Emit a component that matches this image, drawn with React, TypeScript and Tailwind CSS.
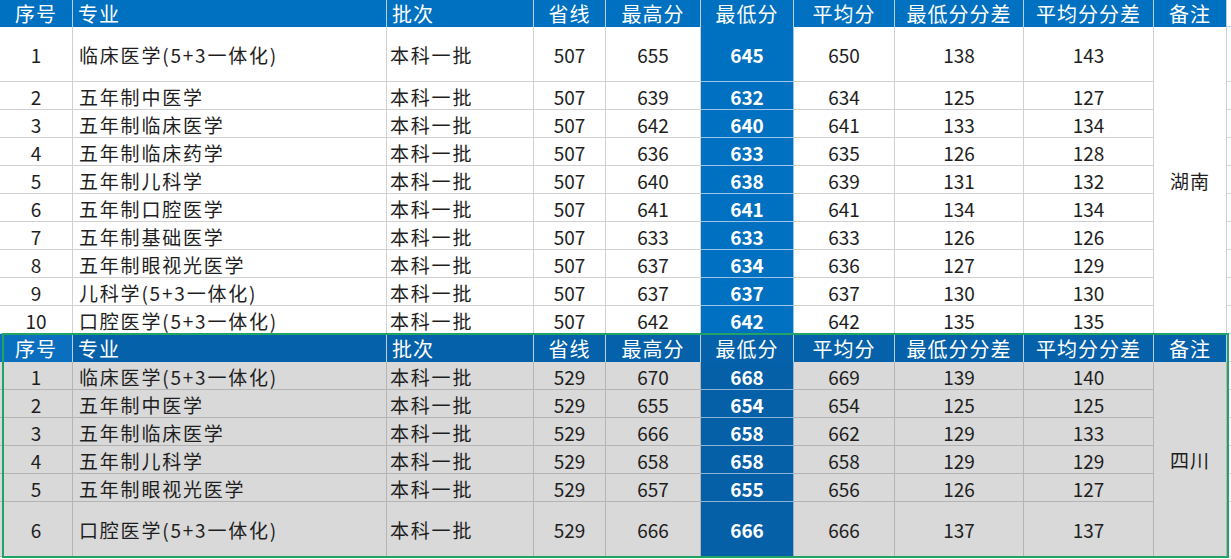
import React from "react";

type Row = [string, string, string, string, string, string, string, string, string];

const s1: Row[] = [
  ["1", "临床医学(5+3一体化)", "本科一批", "507", "655", "645", "650", "138", "143"],
  ["2", "五年制中医学", "本科一批", "507", "639", "632", "634", "125", "127"],
  ["3", "五年制临床医学", "本科一批", "507", "642", "640", "641", "133", "134"],
  ["4", "五年制临床药学", "本科一批", "507", "636", "633", "635", "126", "128"],
  ["5", "五年制儿科学", "本科一批", "507", "640", "638", "639", "131", "132"],
  ["6", "五年制口腔医学", "本科一批", "507", "641", "641", "641", "134", "134"],
  ["7", "五年制基础医学", "本科一批", "507", "633", "633", "633", "126", "126"],
  ["8", "五年制眼视光医学", "本科一批", "507", "637", "634", "636", "127", "129"],
  ["9", "儿科学(5+3一体化)", "本科一批", "507", "637", "637", "637", "130", "130"],
  ["10", "口腔医学(5+3一体化)", "本科一批", "507", "642", "642", "642", "135", "135"],
];

const s2: Row[] = [
  ["1", "临床医学(5+3一体化)", "本科一批", "529", "670", "668", "669", "139", "140"],
  ["2", "五年制中医学", "本科一批", "529", "655", "654", "654", "125", "125"],
  ["3", "五年制临床医学", "本科一批", "529", "666", "658", "662", "129", "133"],
  ["4", "五年制儿科学", "本科一批", "529", "658", "658", "658", "129", "129"],
  ["5", "五年制眼视光医学", "本科一批", "529", "657", "655", "656", "126", "127"],
  ["6", "口腔医学(5+3一体化)", "本科一批", "529", "666", "666", "666", "137", "137"],
];

const headers = ["序号", "专业", "批次", "省线", "最高分", "最低分", "平均分", "最低分分差", "平均分分差", "备注"];

function Header({ second }: { second?: boolean }) {
  return (
    <>
      {headers.map((h, i) => {
        const left = i === 1 || i === 2;
        const bg = second ? (i === 0 ? "bg-[#0a6fbf]" : "bg-[#0561a9]") : "bg-[#0070c0]";
        return (
          <div
            key={h}
            className={`${bg} text-white text-[20px] tracking-[1px] pt-[1px] flex items-center border-r border-[#b9cfe6] ${
              left ? "justify-start pl-[5px]" : "justify-center"
            }`}
          >
            {h}
          </div>
        );
      })}
      <div className="bg-white border-b border-[#d4d4d4]" />
    </>
  );
}

function DataRows({ rows, second, region }: { rows: Row[]; second?: boolean; region: string }) {
  const line = second ? "border-[#b4b4b4]" : "border-[#d0d0d0]";
  const bg = second ? "bg-[#d9d9d9]" : "bg-white";
  const blue = second ? "bg-[#0560a8] border-[#8fb3d6]" : "bg-[#0070c0] border-[#9cc3e8]";
  const span = second ? "row-span-6" : "row-span-10";
  return (
    <>
      {rows.map((r, ri) => (
        <React.Fragment key={ri}>
          {r.map((c, ci) => {
            const isBlue = ci === 5;
            const left = ci === 1 || ci === 2;
            return (
              <div
                key={ci}
                className={`flex items-center border-r border-b pt-[3px] text-[19px] ${
                  isBlue ? `${blue} text-white font-bold` : `${bg} ${line} text-[#1e1e1e]`
                } ${
                  left
                    ? ci === 1
                      ? "justify-start pl-[6px] tracking-[1.8px]"
                      : "justify-start pl-[3px] tracking-[1.8px]"
                    : "justify-center"
                }`}
              >
                {c}
              </div>
            );
          })}
          {ri === 0 && (
            <div
              className={`${bg} ${line} ${span} border-r border-b flex items-center justify-center pt-[3px] text-[19px] text-[#1e1e1e] tracking-[1px]`}
            >
              {region}
            </div>
          )}
          <div className="bg-white border-b border-[#d4d4d4]" />
        </React.Fragment>
      ))}
    </>
  );
}

export default function App() {
  return (
    <div className="relative w-[1231px] h-[559px] overflow-hidden bg-white font-['Noto_Sans_CJK_SC','Noto_Sans',sans-serif]">
      <div className="grid grid-cols-[73px_314px_147px_72px_95px_93px_101px_129px_130px_73px_4px] grid-rows-[27px_55px_repeat(9,28px)]">
        <Header />
        <DataRows rows={s1} region="湖南" />
      </div>
      <div className="grid grid-cols-[73px_314px_147px_72px_95px_93px_101px_129px_130px_73px_4px] grid-rows-[28px_repeat(5,28px)_55px]">
        <Header second />
        <DataRows rows={s2} second region="四川" />
      </div>
      <div className="absolute left-[2px] top-[333px] w-[1227px] h-[225px] border-[2px] border-[#21a366] pointer-events-none" />
    </div>
  );
}
